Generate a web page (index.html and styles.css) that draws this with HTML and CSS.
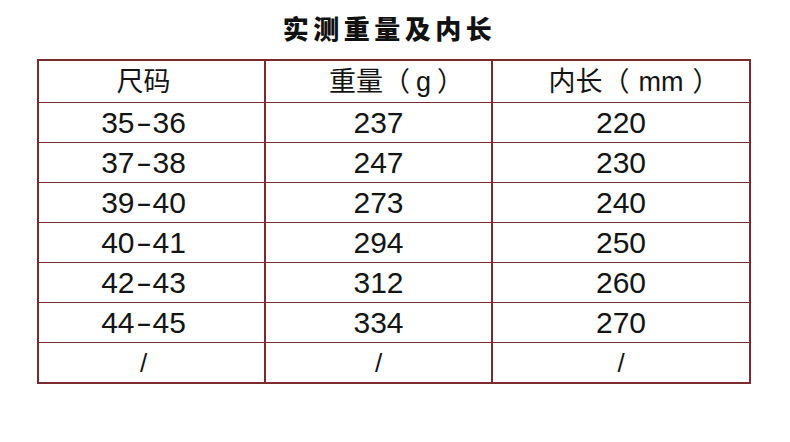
FILE: index.html
```html
<!DOCTYPE html>
<html lang="zh-CN">
<head>
<meta charset="utf-8">
<title>实测重量及内长</title>
<link rel="stylesheet" href="styles.css">
</head>
<body>
<div class="page">
  <h1 class="title">实测重量及内长</h1>
  <table class="size-table">
    <colgroup>
      <col class="c1">
      <col class="c2">
      <col class="c3">
    </colgroup>
    <thead>
      <tr>
        <th class="first">尺码</th>
        <th class="h-weight">重量（<span class="unit">g</span>）</th>
        <th class="h-length">内长（<span class="unit">mm</span>）</th>
      </tr>
    </thead>
    <tbody>
      <tr><td class="first">35<span class="dash">-</span>36</td><td>237</td><td>220</td></tr>
      <tr><td class="first">37<span class="dash">-</span>38</td><td>247</td><td>230</td></tr>
      <tr><td class="first">39<span class="dash">-</span>40</td><td>273</td><td>240</td></tr>
      <tr><td class="first">40<span class="dash">-</span>41</td><td>294</td><td>250</td></tr>
      <tr><td class="first">42<span class="dash">-</span>43</td><td>312</td><td>260</td></tr>
      <tr><td class="first">44<span class="dash">-</span>45</td><td>334</td><td>270</td></tr>
      <tr><td class="first slash">/</td><td class="slash">/</td><td class="slash">/</td></tr>
    </tbody>
  </table>
</div>
</body>
</html>
```
FILE: styles.css
```css
html, body {
  margin: 0;
  padding: 0;
  background: #ffffff;
}

.page {
  width: 790px;
  height: 442px;
  padding-left: 37px;
  box-sizing: border-box;
  font-family: "Liberation Sans", "Noto Sans CJK SC", sans-serif;
  color: #151515;
}

.title {
  width: 711px;
  margin: 0;
  padding-top: 15px;
  height: 59px;
  box-sizing: border-box;
  text-align: center;
  font-family: "Noto Sans CJK SC", sans-serif;
  font-weight: 900;
  font-size: 26px;
  line-height: 26px;
  letter-spacing: 4.5px;
  text-indent: -6px;
  color: #111111;
}

.size-table {
  border-collapse: collapse;
  table-layout: fixed;
  width: 712px;
  border: 2px solid #7b2a2e;
}

.c1 { width: 227px; }
.c2 { width: 227px; }
.c3 { width: 258px; }

.size-table th,
.size-table td {
  height: 39px;
  padding: 0;
  text-align: center;
  vertical-align: middle;
  border-top: 1px solid #7b2a2e;
  border-bottom: 1px solid #7b2a2e;
  border-left: 2px solid #7b2a2e;
  border-right: 2px solid #7b2a2e;
  line-height: 1;
}

.size-table th {
  font-weight: normal;
  font-size: 27px;
  font-family: "Liberation Sans", "Noto Sans CJK SC", sans-serif;
  padding-top: 2px;
}

.size-table th.h-weight {
  padding-left: 36px;
}

.size-table th.h-length {
  padding-left: 26px;
}

.h-weight .unit {
  margin: 0 6px;
}

.h-length .unit {
  margin: 0 9px;
}

.size-table td {
  font-size: 30px;
}

.size-table .first {
  padding-right: 16px;
}

.dash {
  display: inline-block;
  width: 18px;
  text-align: center;
  transform: scaleX(1.6);
}

.size-table td.slash {
  font-size: 26px;
}
```
